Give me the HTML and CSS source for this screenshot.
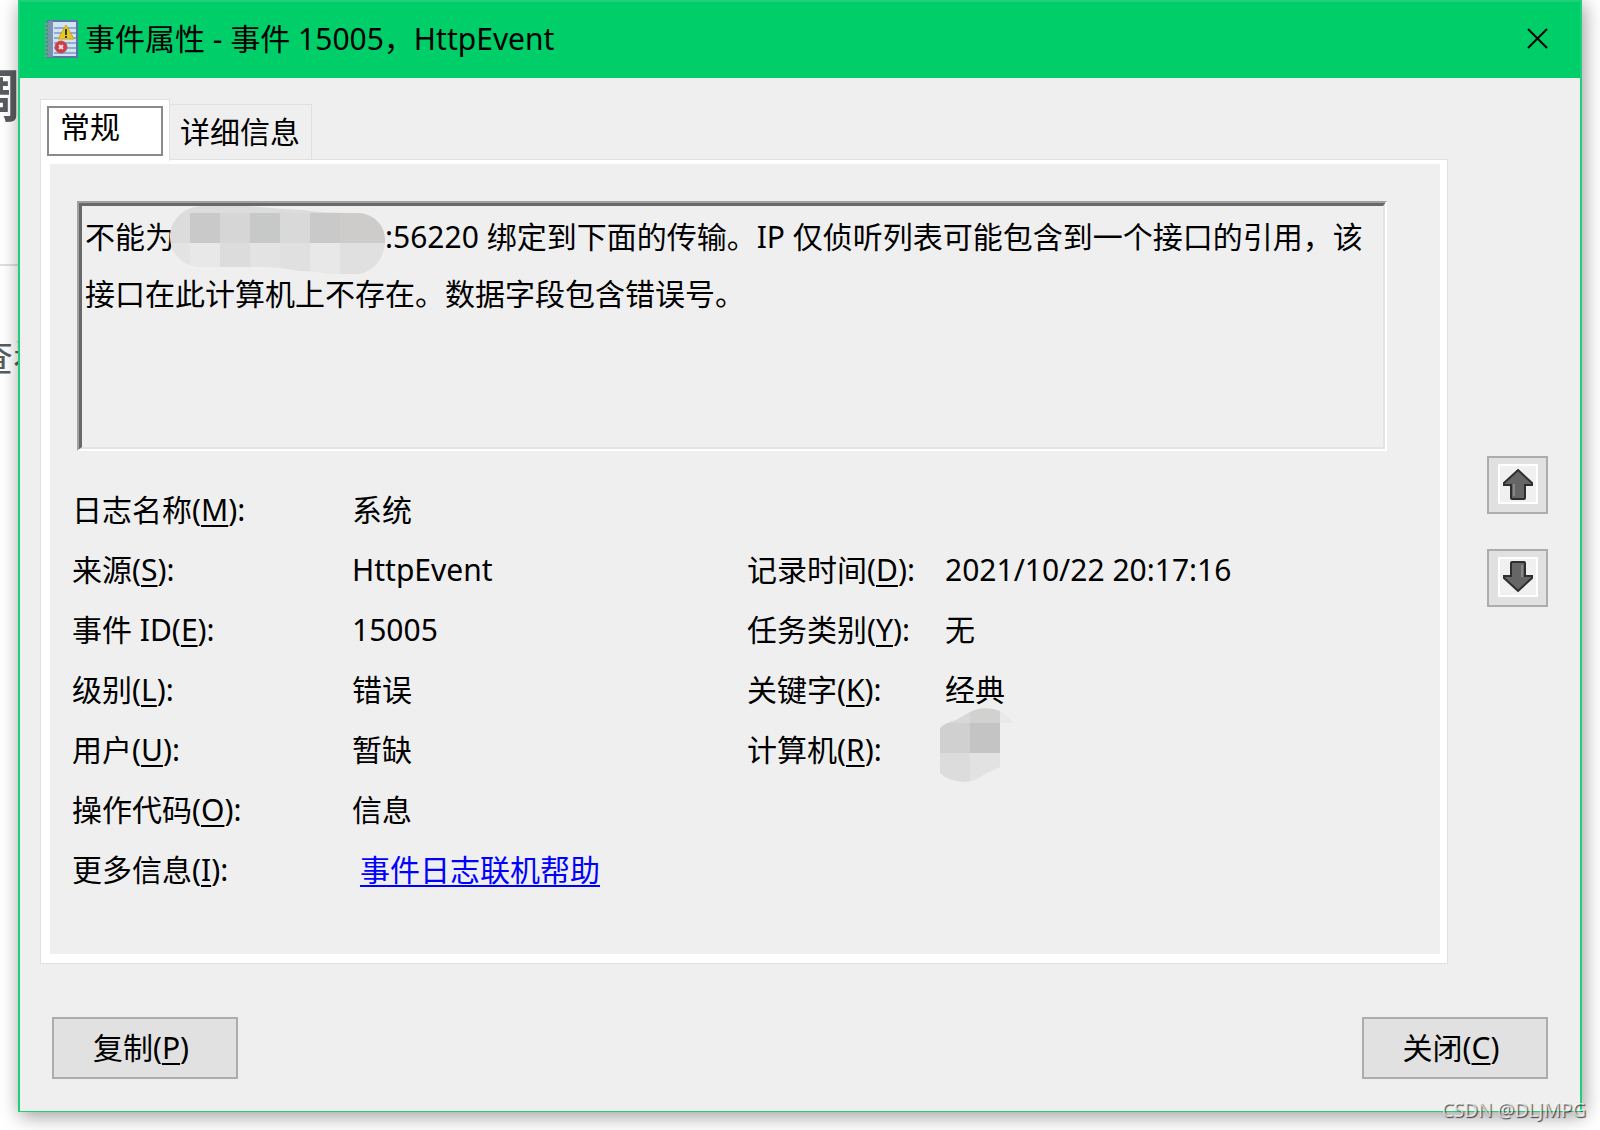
FILE: index.html
```html
<!DOCTYPE html>
<html lang="zh-CN">
<head>
    <meta charset="UTF-8">
    <meta name="viewport" content="width=device-width, initial-scale=1.0">
    <title>事件属性 - 事件 15005，HttpEvent</title>
    <link rel="stylesheet" href="styles.css">
</head>
<body>
    <!-- Page behind the dialog -->
    <div class="backdrop">
        <h2>调</h2>
        <hr>
        <p>查看</p>
    </div>

    <div class="dialog" role="dialog" aria-labelledby="dialog-title">
        <header class="title-bar">
            <svg class="title-icon" viewBox="0 0 36 38" aria-hidden="true">
                <rect x="5" y="1" width="29" height="36" fill="#d3e3f2" stroke="#5b74a8" stroke-width="2"/>
                <rect x="5" y="1" width="5" height="36" fill="#7d8fb5"/>
                <path d="M11 8h22M11 13h22M11 18h22M11 23h22M11 28h22M11 33h22" stroke="#8fabd0" stroke-width="2"/>
                <path d="M1 4h6M1 8h6M1 12h6M1 16h6M1 20h6M1 24h6M1 28h6M1 32h6M1 36h6" stroke="#6f9b8c" stroke-width="2"/>
                <path d="M23 5l8 14H15z" fill="#e8c91f" stroke="#c9a520" stroke-linejoin="round"/>
                <path d="M23 9v6M23 16v2" stroke="#3d3510" stroke-width="2"/>
                <circle cx="18" cy="27" r="6" fill="#cf3d44" stroke="#b3545c"/>
                <path d="M16 25l4 4M20 25l-4 4" stroke="#f3dcdc" stroke-width="2"/>
            </svg>
            <h1 id="dialog-title">事件属性 - 事件 15005，HttpEvent</h1>
            <button class="close-icon" type="button" aria-label="关闭">
                <svg viewBox="0 0 22 22"><path d="M1 1l19 19M20 1L1 20" stroke="#000" stroke-width="2"/></svg>
            </button>
        </header>

        <main class="content">
            <section class="tabs">
                <div class="tab-list" role="tablist">
                    <button class="tab active" type="button" role="tab" aria-selected="true"><span>常规</span></button>
                    <button class="tab" type="button" role="tab" aria-selected="false">详细信息</button>
                </div>

                <div class="panel" role="tabpanel">
                    <div class="message">
                        <textarea readonly aria-label="常规">不能为　　　　　　　:56220 绑定到下面的传输。IP 仅侦听列表可能包含到一个接口的引用，该接口在此计算机上不存在。数据字段包含错误号。</textarea>
                        <svg class="mosaic" viewBox="0 0 215 68" aria-hidden="true">
                            <clipPath id="address-shape">
                                <path d="M30 0H78Q110 3 134 4Q150 7 188 7C205 8 215 20 215 34C215 52 203 67 186 68H160Q148 65 130 65Q100 60 80 61H30C12 60 0 47 0 31S12 2 30 0z"/>
                            </clipPath>
                            <g clip-path="url(#address-shape)">
                                <rect width="215" height="37" fill="#dcdcdc"/>
                                <rect y="37" width="215" height="31" fill="#e3e3e3"/>
                                <rect x="20" y="7" width="30" height="30" fill="#c9c9c9"/>
                                <rect x="50" y="7" width="30" height="30" fill="#d6d6d6"/>
                                <rect x="80" y="7" width="30" height="30" fill="#c7c9c8"/>
                                <rect x="110" y="7" width="30" height="30" fill="#d9d9d9"/>
                                <rect x="140" y="7" width="30" height="30" fill="#c9c9c9"/>
                                <rect x="170" y="7" width="45" height="30" fill="#cdccca"/>
                                <rect x="20" y="37" width="30" height="31" fill="#e8e8e8"/>
                                <rect x="50" y="37" width="30" height="31" fill="#dcdcdc"/>
                                <rect x="110" y="37" width="30" height="31" fill="#e0e0e0"/>
                                <rect x="140" y="37" width="30" height="31" fill="#e8e8e8"/>
                                <rect x="170" y="37" width="45" height="31" fill="#e0e0e0"/>
                            </g>
                        </svg>
                    </div>

                    <div class="fields">
                        <label for="log-name">日志名称(<u>M</u>):</label>
                        <output class="wide" id="log-name">系统</output>

                        <label for="source">来源(<u>S</u>):</label>
                        <output id="source">HttpEvent</output>
                        <label for="logged">记录时间(<u>D</u>):</label>
                        <output id="logged">2021/10/22 20:17:16</output>

                        <label for="event-id">事件 ID(<u>E</u>):</label>
                        <output id="event-id">15005</output>
                        <label for="category">任务类别(<u>Y</u>):</label>
                        <output id="category">无</output>

                        <label for="level">级别(<u>L</u>):</label>
                        <output id="level">错误</output>
                        <label for="keywords">关键字(<u>K</u>):</label>
                        <output id="keywords">经典</output>

                        <label for="user">用户(<u>U</u>):</label>
                        <output id="user">暂缺</output>
                        <label for="computer">计算机(<u>R</u>):</label>
                        <output class="computer" id="computer">
                            <svg viewBox="0 0 73 74" aria-hidden="true">
                                <clipPath id="computer-shape">
                                    <path d="M0 20Q6 14 16 12L30 4Q45 -3 60 3Q68 8 73 15H60V59L45 66Q35 74 24 74Q8 73 0 65z"/>
                                </clipPath>
                                <g clip-path="url(#computer-shape)">
                                    <rect width="30" height="15" fill="#d8d8d8"/>
                                    <rect x="30" width="30" height="15" fill="#d1d1cf"/>
                                    <rect x="60" width="13" height="15" fill="#e8eae9"/>
                                    <rect y="15" width="30" height="30" fill="#d0d0d0"/>
                                    <rect x="30" y="15" width="30" height="30" fill="#c4c4c4"/>
                                    <rect y="45" width="30" height="29" fill="#dcdcdc"/>
                                    <rect x="30" y="45" width="30" height="29" fill="#e2e2e2"/>
                                </g>
                            </svg>
                        </output>

                        <label for="opcode">操作代码(<u>O</u>):</label>
                        <output class="wide" id="opcode">信息</output>

                        <span>更多信息(<u>I</u>):</span>
                        <a class="wide" href="#">事件日志联机帮助</a>
                    </div>
                </div>
            </section>

            <nav class="step-buttons">
                <button type="button" aria-label="上一个事件">
                    <svg viewBox="0 0 40 40">
                        <rect x="1" y="1" width="38" height="38" fill="#f0f0f0" stroke="#fff" stroke-width="2"/>
                        <path d="M20 6L34 19V21H27V34Q27 35 26 35H14Q13 35 13 34V21H6V19z" fill="#666" stroke="#2e2e2e" stroke-width="2"/>
                        <path d="M16 20v12" stroke="#888" stroke-width="2"/>
                    </svg>
                </button>
                <button type="button" aria-label="下一个事件">
                    <svg viewBox="0 0 40 40">
                        <rect x="1" y="1" width="38" height="38" fill="#f0f0f0" stroke="#fff" stroke-width="2"/>
                        <path d="M20 34L34 21V19H27V6Q27 5 26 5H14Q13 5 13 6V19H6V21z" fill="#666" stroke="#2e2e2e" stroke-width="2"/>
                        <path d="M24 8v12" stroke="#888" stroke-width="2"/>
                    </svg>
                </button>
            </nav>
        </main>

        <footer class="actions">
            <button type="button">复制(<u>P</u>)</button>
            <button type="button">关闭(<u>C</u>)</button>
        </footer>
    </div>

    <div class="watermark">CSDN @DLJMPG</div>
</body>
</html>
```
FILE: styles.css
```css
* {
    margin: 0;
    padding: 0;
    box-sizing: border-box;
}

body {
    position: relative;
    display: flow-root;
    min-height: 100vh;
    background: white;
    color: black;
    font-family: "Noto Sans", "Noto Sans CJK SC", sans-serif;
    font-size: 30px;
    line-height: 40px;
    overflow: hidden;
}

button,
textarea {
    font: inherit;
    color: inherit;
}

svg {
    display: block;
}

u {
    text-decoration-thickness: 2px;
    text-underline-offset: 4px;
}

/* Page behind the dialog */
.backdrop {
    position: absolute;
    top: 54px;
    left: -36px;
    color: #5a5b60;
}

.backdrop h2 {
    font-size: 56px;
    line-height: 80px;
}

.backdrop hr {
    margin: 130px 0 66px;
    border: none;
    border-top: 2px solid #e0e0e0;
}

.backdrop p {
    margin-left: 11px;
    font-size: 38px;
    line-height: 48px;
}

/* Dialog */
.dialog {
    position: relative;
    margin: 0 18px;
    background: #efefef;
    border: 2px solid #1fd07a;
    border-bottom-width: 1px;
    box-shadow: 2px 4px 18px rgba(0, 0, 0, 0.4);
}

.title-bar {
    display: flex;
    align-items: center;
    height: 76px;
    padding: 0 31px 2px 23px;
    background: #00cf69;
}

.title-icon {
    width: 36px;
    height: 38px;
    margin-right: 6px;
}

.title-bar h1 {
    flex: 1;
    font-size: 30px;
    font-weight: normal;
}

.close-icon {
    width: 22px;
    height: 22px;
    background: none;
    border: none;
}

/* Tabs */
.content {
    display: flex;
    gap: 40px;
    padding: 21px 32px 0 21px;
}

.tabs {
    flex: 1;
}

.tab-list {
    display: flex;
    align-items: flex-end;
}

.tab {
    height: 56px;
    padding: 0 11px 2px 10px;
    background: #efefef;
    border: 1px solid #e0e0e0;
    border-left: none;
    border-bottom: none;
}

.tab.active {
    position: relative;
    width: 130px;
    height: 62px;
    margin-bottom: -1px;
    margin-left: -1px;
    padding: 6px;
    background: white;
    border-left: 1px solid #e0e0e0;
}

.tab.active span {
    display: block;
    height: 50px;
    padding-left: 11px;
    border: 2px solid #8a8a8a;
    line-height: 38px;
    text-align: left;
}

.panel {
    padding: 37px 53px 54px 22px;
    background: #efefef;
    border: solid white;
    border-width: 4px 7px 9px 9px;
    outline: 1px solid #e0e0e0;
}

/* Description box */
.message {
    position: relative;
    margin-left: 5px;
}

.message textarea {
    display: block;
    width: 100%;
    height: 250px;
    padding: 2px 3px;
    background: #efefef;
    border: 5px solid;
    border-color: #696969 #e3e3e3 #e3e3e3 #696969;
    border-right-width: 4px;
    border-bottom-width: 4px;
    outline: none;
    line-height: 57px;
    resize: none;
    overflow: hidden;
}

.message::after {
    content: "";
    position: absolute;
    inset: 0;
    border: 2px solid;
    border-color: #a0a0a0 white white #a0a0a0;
    pointer-events: none;
}

.mosaic {
    position: absolute;
    top: 5px;
    left: 93px;
    width: 215px;
    height: 68px;
}

/* Event fields */
.fields {
    display: grid;
    grid-template-columns: 280px 395px 198px 1fr;
    grid-auto-rows: 60px;
    align-items: center;
    margin-top: 29px;
}

.fields .wide {
    grid-column: 2 / -1;
}

.fields a {
    justify-self: start;
    margin-left: 8px;
    color: #0000ff;
    text-decoration-thickness: 2px;
    text-underline-offset: 4px;
}

.computer {
    position: relative;
    align-self: stretch;
}

.computer svg {
    position: absolute;
    top: -12px;
    left: -5px;
    width: 73px;
    height: 74px;
}

/* Buttons */
.step-buttons {
    display: flex;
    flex-direction: column;
    gap: 35px;
    padding-top: 357px;
}

.step-buttons button,
.actions button {
    background: #e1e1e1;
    border: 2px solid #adadad;
}

.step-buttons button {
    display: flex;
    align-items: center;
    justify-content: center;
    width: 61px;
    height: 58px;
    padding-bottom: 2px;
}

.step-buttons svg {
    width: 40px;
    height: 40px;
}

.actions {
    display: flex;
    justify-content: space-between;
    padding: 54px 32px 32px;
}

.actions button {
    width: 186px;
    height: 62px;
    padding-right: 8px;
}

.watermark {
    position: absolute;
    right: 14px;
    bottom: 7px;
    color: rgba(255, 255, 255, 0.7);
    font-size: 19px;
    line-height: 26px;
    text-shadow: 1px 1px 1px rgba(0, 0, 0, 0.7);
}
```
